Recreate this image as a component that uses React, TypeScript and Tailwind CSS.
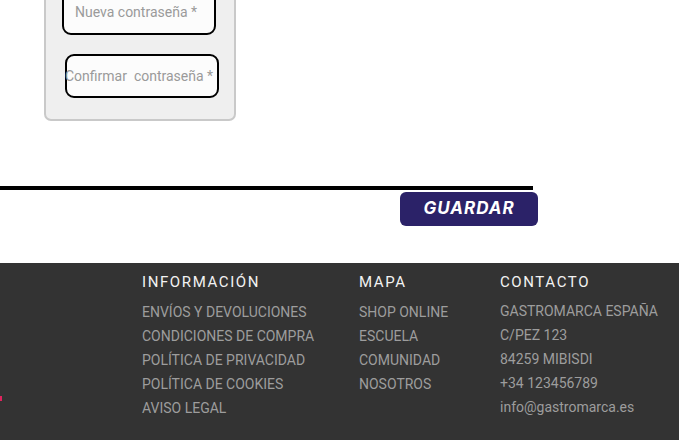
export default function App() {
  const info = [
    "ENVÍOS Y DEVOLUCIONES",
    "CONDICIONES DE COMPRA",
    "POLÍTICA DE PRIVACIDAD",
    "POLÍTICA DE COOKIES",
    "AVISO LEGAL",
  ];
  const mapa = ["SHOP ONLINE", "ESCUELA", "COMUNIDAD", "NOSOTROS"];
  const contacto = [
    "GASTROMARCA ESPAÑA",
    "C/PEZ 123",
    "84259 MIBISDI",
    "+34 123456789",
    "info@gastromarca.es",
  ];

  return (
    <div className="w-[679px] h-[440px] overflow-hidden bg-white font-['Roboto',sans-serif]">
      {/* password panel */}
      <div className="ml-[44px] mt-[-40px] w-[192px] h-[161px] bg-[#efefef] border-2 border-[#c9c9c9] rounded-b-[7px] flex flex-col">
        <div className="ml-[16px] mt-[28px] w-[154px] h-[45px] border-2 border-black rounded-[9px] bg-[#fcfcfc] flex items-center pl-[11px] text-[14px] text-[#9a9a9a]">
          Nueva contraseña *
        </div>
        <div className="ml-[19px] mt-[19px] w-[154px] h-[44px] border-2 border-black rounded-[9px] bg-[#fcfcfc] flex items-center text-[14px] text-[#9a9a9a] whitespace-pre overflow-visible">
          <span className="-ml-[2px]">Confirmar  contraseña *</span>
        </div>
      </div>

      {/* divider + save */}
      <div className="mt-[65px] w-[533px] h-[4px] bg-black" />
      <div className="flex mt-[2px]">
        <button className="ml-[400px] w-[138px] h-[34px] rounded-[6px] bg-[#2b2268] text-white font-bold italic text-[17px] tracking-[1px] font-['Inter',sans-serif]">
          GUARDAR
        </button>
      </div>

      {/* footer */}
      <div className="relative mt-[37px] h-[177px] bg-[#333333] flex pt-[10px]">
        <div className="absolute left-0 top-[133px] w-[2px] h-[5px] bg-[#e0245e]" />
        <div className="ml-[142px] w-[217px]">
          <h3 className="text-[15px] text-[#f2f2f2] tracking-[1.6px] leading-[18px]">INFORMACIÓN</h3>
          <ul className="mt-[9px] text-[14px] text-[#9d9d9d] leading-[24px]">
            {info.map((t) => (
              <li key={t}>{t}</li>
            ))}
          </ul>
        </div>
        <div className="w-[141px]">
          <h3 className="text-[15px] text-[#f2f2f2] tracking-[1.6px] leading-[18px]">MAPA</h3>
          <ul className="mt-[9px] text-[14px] text-[#9d9d9d] leading-[24px]">
            {mapa.map((t) => (
              <li key={t}>{t}</li>
            ))}
          </ul>
        </div>
        <div>
          <h3 className="text-[15px] text-[#f2f2f2] tracking-[1.6px] leading-[18px]">CONTACTO</h3>
          <ul className="mt-[8px] text-[14px] text-[#9d9d9d] leading-[24px]">
            {contacto.map((t) => (
              <li key={t}>{t}</li>
            ))}
          </ul>
        </div>
      </div>
    </div>
  );
}
